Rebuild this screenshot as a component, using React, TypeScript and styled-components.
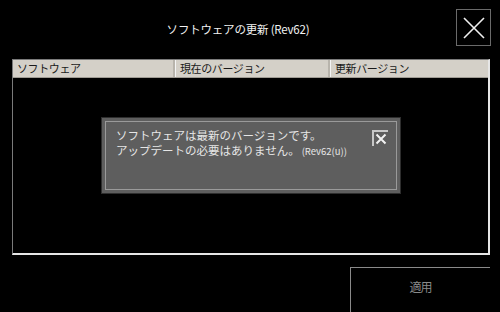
import styled, { createGlobalStyle } from "styled-components";

const GlobalStyle = createGlobalStyle`
  html, body {
    margin: 0;
    padding: 0;
    background: #000;
  }
  body {
    font-family: "Noto Sans CJK JP", "Noto Sans", sans-serif;
  }
`;

const Screen = styled.div`
  width: 500px;
  height: 312px;
  background: #000;
  display: flex;
  flex-direction: column;
  overflow: hidden;
`;

const Header = styled.div`
  display: flex;
  align-items: flex-start;
  height: 59px;
  padding: 9px 9px 0 12px;
  box-sizing: border-box;
`;

const Title = styled.div`
  flex: 1;
  text-align: center;
  color: #f2f2f2;
  font-size: 11.5px;
  letter-spacing: -0.2px;
  line-height: 16px;
  padding-top: 12px;
  padding-left: 8px;
`;

const CloseButton = styled.button`
  width: 35px;
  height: 37px;
  border: 1px solid #6a6a6a;
  background: #000;
  padding: 0;
  display: flex;
  align-items: center;
  justify-content: center;
  cursor: pointer;
`;

const TableBox = styled.div`
  position: relative;
  margin: 0 10px 0 12px;
  height: 196px;
  box-sizing: border-box;
  border-left: 1px solid #7a7a7a;
  border-top: 1px solid #7a7a7a;
  border-right: 2px solid #e6e6e6;
  border-bottom: 2px solid #e6e6e6;
`;

const HeaderRow = styled.div`
  display: grid;
  grid-template-columns: 163px 155px 1fr;
  height: 17px;
  background: #d4d0c8;
  border-bottom: 1px solid #a09c94;
`;

const HeadCell = styled.div`
  font-size: 11px;
  letter-spacing: -0.4px;
  line-height: 17px;
  color: #1a1a1a;
  padding-left: 4px;
  border-right: 1px solid #f4f4f4;
  box-shadow: inset -2px 0 0 #b8b4ac;
  white-space: nowrap;
  &:last-child {
    border-right: none;
    box-shadow: none;
  }
`;

const Dialog = styled.div`
  position: absolute;
  left: 88px;
  top: 57px;
  width: 300px;
  height: 77px;
  box-sizing: border-box;
  background: #5e5e5e;
  border: 1px solid #2e2e2e;
  padding: 3px;
`;

const DialogInner = styled.div`
  height: 100%;
  box-sizing: border-box;
  border: 1px solid #9a9a9a;
  display: flex;
  justify-content: space-between;
  padding: 6px 8px 0 10px;
`;

const Message = styled.div`
  color: #e6e6e6;
  font-size: 11.5px;
  line-height: 15px;
  white-space: nowrap;
`;

const Rev = styled.span`
  font-size: 9.5px;
  margin-left: 2px;
`;

const DialogClose = styled.div`
  width: 16px;
  height: 16px;
  margin-top: 2px;
  border-left: 2px solid #c8c8c8;
  border-top: 2px solid #c8c8c8;
  box-sizing: border-box;
  display: flex;
  align-items: center;
  justify-content: center;
`;

const Footer = styled.div`
  display: flex;
  justify-content: flex-end;
  padding: 12px 10px 0 0;
  flex: 1;
`;

const ApplyButton = styled.div`
  width: 140px;
  box-sizing: border-box;
  border-left: 1px solid #8a8a8a;
  border-top: 1px solid #8a8a8a;
  color: #8a8a8a;
  font-size: 12px;
  text-align: center;
  padding-top: 10px;
  letter-spacing: -1px;
`;

export default function App() {
  return (
    <>
      <GlobalStyle />
      <Screen>
        <Header>
          <Title>ソフトウェアの更新 (Rev62)</Title>
          <CloseButton>
            <svg width="24" height="24" viewBox="0 0 24 24">
              <path d="M2 2 L22 22 M22 2 L2 22" stroke="#f0f0f0" strokeWidth="1.6" />
            </svg>
          </CloseButton>
        </Header>
        <TableBox>
          <HeaderRow>
            <HeadCell>ソフトウェア</HeadCell>
            <HeadCell>現在のバージョン</HeadCell>
            <HeadCell>更新バージョン</HeadCell>
          </HeaderRow>
          <Dialog>
            <DialogInner>
              <Message>
                ソフトウェアは最新のバージョンです。
                <br />
                アップデートの必要はありません。<Rev>(Rev62(u))</Rev>
              </Message>
              <DialogClose>
                <svg width="12" height="12" viewBox="0 0 12 12">
                  <path d="M1.5 1.5 L10.5 10.5 M10.5 1.5 L1.5 10.5" stroke="#f2f2f2" strokeWidth="2" />
                </svg>
              </DialogClose>
            </DialogInner>
          </Dialog>
        </TableBox>
        <Footer>
          <ApplyButton>適用</ApplyButton>
        </Footer>
      </Screen>
    </>
  );
}
